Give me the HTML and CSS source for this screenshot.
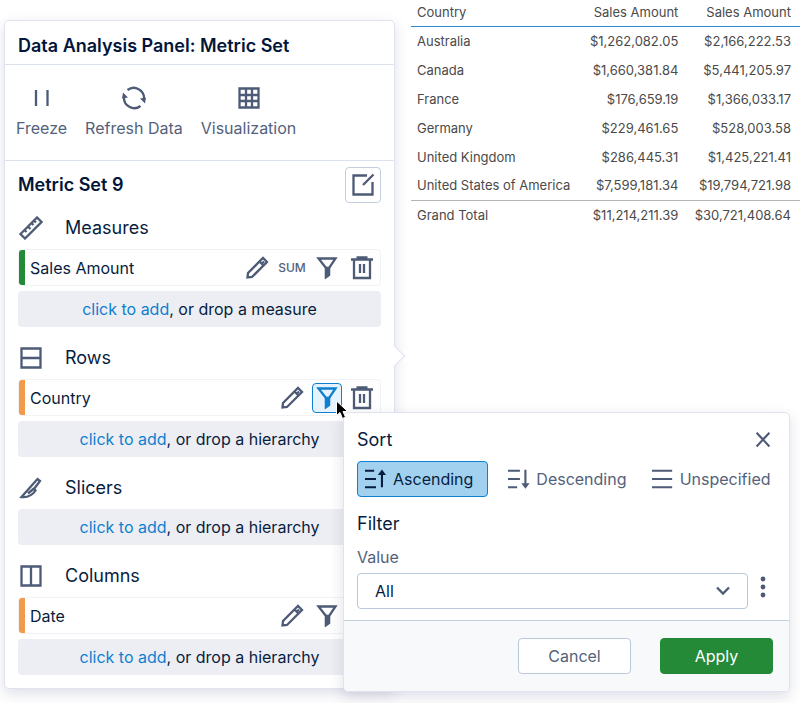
FILE: index.html
```html
<!DOCTYPE html>
<html lang="en">
<head>
  <meta charset="UTF-8" />
  <meta name="viewport" content="width=device-width, initial-scale=1.0" />
  <title>Data Analysis Panel</title>
  <link rel="stylesheet" href="styles.css">
</head>
<body>
  <!-- shared icons -->
  <svg class="sprite" width="0" height="0" aria-hidden="true">
    <symbol id="pencil" viewBox="0 0 24 24">
      <path d="M2.500 21.500l.5-4.500L18 2l4 4L7 21zM14.500 5.500l4 4M17.500 5.500l1.500 1.500"></path>
    </symbol>
    <symbol id="funnel" viewBox="0 0 24 24">
      <path d="M3.500 2.500h17l-6.500 9.500v7L11 21v-9z"></path>
      <path d="M11 12h3v7L11 21z" fill="currentColor"></path>
    </symbol>
    <symbol id="trash" viewBox="0 0 24 24">
      <path d="M1 3.500h22M6.500 1.500h11M4 4v18h16V4M10 8v9M14 8v9"></path>
    </symbol>
  </svg>

  <div class="page">
    <section class="panel">
      <h1 class="panel-title">Data Analysis Panel: Metric Set</h1>

      <div class="toolbar">
        <button class="tool">
          <svg class="icon" viewBox="0 0 24 24"><path d="M6 4v16M17.500 4v16"></path></svg>
          Freeze
        </button>
        <button class="tool">
          <svg class="icon" viewBox="0 0 24 24">
            <path d="M5.500 4A10.300 10.300 0 0 1 22 13M18.500 20A10.300 10.300 0 0 1 2 11"></path>
            <path d="M18 12.500l6-1-1 6zM6 11.500l-6 1 1-6z" class="solid"></path>
          </svg>
          Refresh Data
        </button>
        <button class="tool">
          <svg class="icon" viewBox="0 0 24 24"><path d="M2.500 2.500h19v19h-19zM9 2.500v19M15 2.500v19M2.500 9h19M2.500 15h19"></path></svg>
          Visualization
        </button>
      </div>

      <div class="metric-set">
        <div class="metric-head">
          <h2>Metric Set 9</h2>
          <button class="edit" aria-label="Edit metric set">
            <svg class="icon" viewBox="0 0 24 24"><path d="M16 2.500H2.500v19h19V9M12 12L22.500 1.500"></path></svg>
          </button>
        </div>

        <div class="group">
          <h3>
            <svg class="icon" viewBox="0 0 24 24"><path d="M1.500 18L18 1.500l4.500 4.500L6 22.500zM5.500 14l2 2M9 10.500l2.500 2.500M12.500 7l2 2M15 4.500l2 2"></path></svg>
            Measures
          </h3>
          <div class="item measure">
            <span class="item-name">Sales Amount</span>
            <button class="action" aria-label="Edit"><svg class="icon"><use href="#pencil"></use></svg></button>
            <button class="action sum">SUM</button>
            <button class="action" aria-label="Filter"><svg class="icon"><use href="#funnel"></use></svg></button>
            <button class="action" aria-label="Delete"><svg class="icon"><use href="#trash"></use></svg></button>
          </div>
          <p class="drop"><a href="#">click to add</a>, or drop a measure</p>
        </div>

        <div class="group current">
          <h3>
            <svg class="icon" viewBox="0 0 24 24"><path d="M2.500 2.500h19v19h-19zM2.500 12h19"></path></svg>
            Rows
          </h3>
          <div class="item">
            <span class="item-name">Country</span>
            <button class="action" aria-label="Edit"><svg class="icon"><use href="#pencil"></use></svg></button>
            <button class="action active" aria-label="Filter"><svg class="icon"><use href="#funnel"></use></svg></button>
            <button class="action" aria-label="Delete"><svg class="icon"><use href="#trash"></use></svg></button>

            <form class="popup">
              <div class="popup-body">
                <div class="popup-head">
                  <h4>Sort</h4>
                  <button type="button" class="close" aria-label="Close">
                    <svg class="icon" viewBox="0 0 24 24"><path d="M5 4l14 15M19 4L5 19"></path></svg>
                  </button>
                </div>
                <div class="sort">
                  <button type="button" class="selected">
                    <svg class="icon" viewBox="0 0 24 24"><path d="M0 3h10M0 12h12M0 21h12M18.500 21V5"></path><path d="M14 7.500l4.500-6 4.500 6z" class="solid"></path></svg>
                    Ascending
                  </button>
                  <button type="button">
                    <svg class="icon" viewBox="0 0 24 24"><path d="M0 3h13M0 12h13M0 21h10M19 2v17"></path><path d="M14.500 16.500l4.500 6 4.500-6z" class="solid"></path></svg>
                    Descending
                  </button>
                  <button type="button">
                    <svg class="icon" viewBox="0 0 24 24"><path d="M0 3h22M0 12h22M0 21h22"></path></svg>
                    Unspecified
                  </button>
                </div>
                <h4 class="filter-title">Filter</h4>
                <label for="filter-value">Value</label>
                <div class="value-row">
                  <div class="select">
                    <select id="filter-value"><option>All</option></select>
                    <svg class="icon chevron" viewBox="0 0 16 16"><path d="M2 4.500l6 6 6-6"></path></svg>
                  </div>
                  <button type="button" class="more" aria-label="More options">
                    <svg viewBox="0 0 6 22"><circle cx="3" cy="3" r="2.400"></circle><circle cx="3" cy="11" r="2.400"></circle><circle cx="3" cy="19" r="2.400"></circle></svg>
                  </button>
                </div>
              </div>
              <div class="popup-foot">
                <button type="button" class="btn">Cancel</button>
                <button type="button" class="btn primary">Apply</button>
              </div>
            </form>
            <svg class="pointer" viewBox="0 0 14 20" aria-hidden="true"><path d="M1.500 1v14.500l3.500-3 2.500 6 3-1.300-2.500-5.700h4.700z"></path></svg>
          </div>
          <p class="drop"><a href="#">click to add</a>, or drop a hierarchy</p>
        </div>

        <div class="group">
          <h3>
            <svg class="icon" viewBox="0 0 24 24"><path d="M2.500 21L18.500 3l2.500 2-6 8 1.500 1.500C13 20 8.500 21.500 2.500 21zM9 17.500l6-5"></path></svg>
            Slicers
          </h3>
          <p class="drop"><a href="#">click to add</a>, or drop a hierarchy</p>
        </div>

        <div class="group">
          <h3>
            <svg class="icon" viewBox="0 0 24 24"><path d="M2.500 2.500h19v19h-19zM12 2.500v19"></path></svg>
            Columns
          </h3>
          <div class="item">
            <span class="item-name">Date</span>
            <button class="action" aria-label="Edit"><svg class="icon"><use href="#pencil"></use></svg></button>
            <button class="action" aria-label="Filter"><svg class="icon"><use href="#funnel"></use></svg></button>
            <button class="action" aria-label="Delete"><svg class="icon"><use href="#trash"></use></svg></button>
          </div>
          <p class="drop"><a href="#">click to add</a>, or drop a hierarchy</p>
        </div>
      </div>
    </section>

    <table class="data">
      <thead>
        <tr><th>Country</th><th>Sales Amount</th><th>Sales Amount</th></tr>
      </thead>
      <tbody>
        <tr><td>Australia</td><td>$1,262,082.05</td><td>$2,166,222.53</td></tr>
        <tr><td>Canada</td><td>$1,660,381.84</td><td>$5,441,205.97</td></tr>
        <tr><td>France</td><td>$176,659.19</td><td>$1,366,033.17</td></tr>
        <tr><td>Germany</td><td>$229,461.65</td><td>$528,003.58</td></tr>
        <tr><td>United Kingdom</td><td>$286,445.31</td><td>$1,425,221.41</td></tr>
        <tr><td>United States of America</td><td>$7,599,181.34</td><td>$19,794,721.98</td></tr>
      </tbody>
      <tfoot>
        <tr><td>Grand Total</td><td>$11,214,211.39</td><td>$30,721,408.64</td></tr>
      </tfoot>
    </table>
  </div>
</body>
</html>
```
FILE: styles.css
```css
* {
  box-sizing: border-box;
}
body {
  margin: 0;
  background: #fff;
  color: #071d40;
  font-family: Inter, "Liberation Sans", sans-serif;
  font-size: 16px;
  line-height: 20px;
}
h1, h2, h3, h4, p {
  margin: 0;
  font-weight: 400;
}
button {
  margin: 0;
  padding: 0;
  border: 1px solid transparent;
  border-radius: 4px;
  background: none;
  color: #53627c;
  font: inherit;
  cursor: pointer;
}
a {
  color: #0f7fcf;
  text-decoration: none;
}
.sprite {
  position: absolute;
}
.icon {
  display: block;
  flex: none;
  width: 24px;
  height: 24px;
  fill: none;
  stroke: currentColor;
  stroke-width: 2.3;
  color: #4d5b76;
}
.solid {
  fill: currentColor;
  stroke: none;
}
.page {
  display: flex;
  align-items: flex-start;
  gap: 16px;
  min-height: 100vh;
  padding-left: 4px;
}

/* panel */
.panel {
  flex: 0 0 auto;
  width: 49%;
  min-width: 391px;
  max-width: 480px;
  margin: 20px 0;
  border: 1px solid #dfe3ee;
  border-radius: 5px;
  background: #fff;
  box-shadow: 0 5px 14px rgba(40, 50, 100, 0.15);
}
.panel-title {
  padding: 13px 13px 6px;
  border-bottom: 1px solid #dce2ed;
  font-size: 18px;
  font-weight: 600;
  line-height: 24px;
  color: #03163a;
}
.toolbar {
  display: flex;
  gap: 16px;
  padding: 20px 10px 21px;
  border-bottom: 1px solid #dce2ed;
}
.tool {
  display: flex;
  flex-direction: column;
  align-items: center;
  gap: 8px;
}
.metric-set {
  padding: 6px 13px 13px;
}
.metric-head {
  display: flex;
  align-items: center;
  justify-content: space-between;
}
.metric-head h2 {
  font-size: 18px;
  font-weight: 600;
  color: #03163a;
}
.edit {
  display: flex;
  align-items: center;
  justify-content: center;
  width: 36px;
  height: 36px;
  border-color: #c3cfdf;
}
.group {
  margin-top: 16px;
}
.metric-head + .group {
  margin-top: 10px;
}
.group h3 {
  position: relative;
  display: flex;
  align-items: center;
  gap: 22px;
  height: 30px;
  margin-bottom: 6px;
  padding-left: 1px;
  font-size: 18px;
}
.current h3::after {
  content: "";
  position: absolute;
  top: 5px;
  right: -21px;
  width: 15px;
  height: 15px;
  border: 1px solid #dfe3ee;
  border-width: 1px 1px 0 0;
  background: #fff;
  transform: rotate(45deg);
}
.item {
  position: relative;
  display: flex;
  align-items: center;
  gap: 5px;
  height: 37px;
  margin-bottom: 5px;
  padding-right: 3px;
  border: 1px solid #f1f2f5;
  border-radius: 4px;
}
.item::before {
  content: "";
  align-self: stretch;
  width: 6px;
  border-radius: 3px 0 0 3px;
  background: #f2994a;
}
.measure::before {
  background: #248a38;
}
.item-name {
  flex: 1;
  font-size: 16px;
}
.action {
  display: flex;
  align-items: center;
  justify-content: center;
  width: 30px;
  height: 30px;
}
.sum {
  font-size: 12px;
  font-weight: 500;
}
.action.active {
  border-color: #0f7fcf;
  background: #e6f3fc;
}
.action.active .icon {
  color: #0f7fcf;
}
.drop {
  height: 36px;
  border-radius: 4px;
  background: #edeef3;
  line-height: 36px;
  text-align: center;
}

/* sort and filter popup */
.popup {
  position: absolute;
  z-index: 2;
  top: 32px;
  left: 324px;
  width: 447px;
  border: 1px solid #dfe3ee;
  border-radius: 5px;
  background: #fff;
  box-shadow: 0 5px 14px rgba(40, 50, 100, 0.15);
}
.popup-body {
  padding: 15px 14px 11px 13px;
}
.popup-head {
  display: flex;
  align-items: center;
  justify-content: space-between;
}
.popup h4 {
  font-size: 18px;
  line-height: 24px;
}
.close .icon {
  width: 22px;
  height: 22px;
}
.sort {
  display: flex;
  gap: 12px;
  margin: 9px 0 15px;
}
.sort button {
  display: flex;
  flex: 1;
  align-items: center;
  gap: 6px;
  height: 36px;
  padding-left: 7px;
}
.sort .icon {
  width: 22px;
  height: 22px;
  overflow: visible;
}
.sort .selected {
  border-color: #0f7fcf;
  background: #a2d1f0;
  color: #071d40;
}
.sort .selected .icon {
  color: #071d40;
}
.popup label {
  display: block;
  margin: 11px 0 6px;
  color: #53627c;
}
.value-row {
  display: flex;
  gap: 3px;
}
.select {
  position: relative;
  flex: 1;
}
.select select {
  display: block;
  width: 100%;
  height: 36px;
  padding: 0 17px;
  border: 1px solid #b9c8da;
  border-radius: 4px;
  background: #fff;
  color: #071d40;
  font: inherit;
  appearance: none;
}
.chevron {
  position: absolute;
  top: 10px;
  right: 17px;
  width: 16px;
  height: 16px;
  pointer-events: none;
}
.more {
  width: 24px;
  height: 28px;
}
.more svg {
  display: block;
  width: 6px;
  height: 22px;
  margin: auto;
  fill: #4d5b76;
}
.popup-foot {
  display: flex;
  justify-content: flex-end;
  gap: 29px;
  padding: 17px 16px;
  border-top: 1px solid #c3d0de;
  border-radius: 0 0 4px 4px;
  background: #f7f9fb;
}
.btn {
  width: 113px;
  height: 36px;
  border-color: #b9c8da;
  background: #fff;
}
.btn.primary {
  border-color: #248a38;
  background: #248a38;
  color: #fff;
}
.pointer {
  position: absolute;
  z-index: 3;
  top: 20px;
  right: 31px;
  width: 14px;
  height: 20px;
  fill: #000;
  stroke: #fff;
  stroke-width: 1;
}

/* table */
.data {
  flex: 1;
  border-collapse: collapse;
  color: #4a4a4a;
  font-size: 13px;
  white-space: nowrap;
}
.data th, .data td {
  height: 29px;
  padding: 0 9px 0 5px;
  font-weight: 400;
  text-align: right;
}
.data th {
  height: 26px;
  padding-bottom: 2px;
  border-bottom: 1px solid #2a8bd6;
}
.data th:first-child, .data td:first-child {
  padding-left: 6px;
  text-align: left;
}
.data tfoot td {
  border-top: 1px solid #b4b4b4;
}
```
